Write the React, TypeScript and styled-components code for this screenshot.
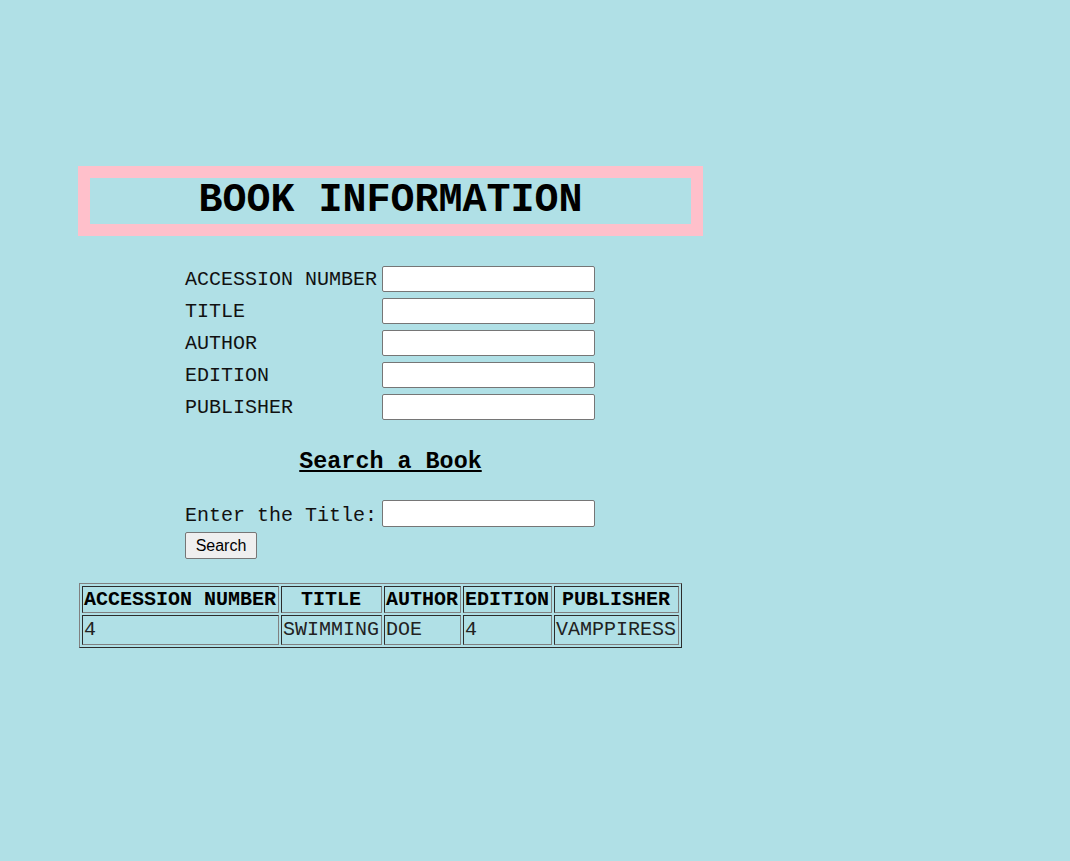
import React from "react";
import styled, { createGlobalStyle } from "styled-components";

const Global = createGlobalStyle`
  html, body {
    margin: 0;
    padding: 0;
    background: #b0e0e6;
  }
  body {
    font-family: "Liberation Mono", "Courier New", monospace;
    font-size: 20px;
    color: #000;
  }
`;

const Page = styled.div`
  padding: 166px 0 0 78px;
  min-height: 861px;
  box-sizing: border-box;
`;

const Column = styled.div`
  width: 625px;
  display: flex;
  flex-direction: column;
`;

const Banner = styled.h1`
  margin: 0;
  border: 12px solid #ffc0cb;
  height: 46px;
  line-height: 46px;
  font-size: 40px;
  font-weight: bold;
  text-align: center;
`;

const FieldGrid = styled.div<{ $top: number }>`
  display: grid;
  grid-template-columns: 192px 213px;
  column-gap: 5px;
  row-gap: 6px;
  align-self: flex-start;
  margin: ${(p) => p.$top}px 0 0 107px;
`;

const Label = styled.label<{ $shift?: number }>`
  font-size: 20px;
  line-height: 26px;
  height: 26px;
  padding-top: ${(p) => p.$shift ?? 1}px;
  box-sizing: border-box;
  white-space: nowrap;
  color: #111;
`;

const TextInput = styled.input`
  box-sizing: border-box;
  width: 213px;
  height: 26px;
  margin: 0;
  border: 1px solid #767676;
  border-radius: 2px;
  background: #fff;
  padding: 1px 2px;
  font-size: 16px;
`;

const SearchInput = styled(TextInput)`
  height: 27px;
`;

const SubHeading = styled.h3`
  margin: 29px 0 0;
  font-size: 23.4px;
  line-height: 26px;
  font-weight: bold;
  text-decoration: underline;
  text-align: center;
`;

const ButtonRow = styled.div`
  grid-column: 1 / span 2;
  margin-top: -1px;
`;

const Button = styled.button`
  box-sizing: border-box;
  height: 27px;
  width: 72px;
  margin: 0;
  padding: 0 8px;
  font-family: Arial, "Liberation Sans", sans-serif;
  font-size: 16px;
  color: #000;
  background: #efefef;
  border: 1px solid #767676;
  border-radius: 2px;
`;

const ResultTable = styled.table`
  margin: 24px 0 0 1px;
  border-collapse: separate;
  border-spacing: 2px;
  border: 1px outset #808080;
  font-size: 20px;
`;

const HeadCell = styled.th`
  border: 1px inset #808080;
  padding: 1px 2px 1px 1px;
  font-weight: bold;
  text-align: center;
  line-height: 23px;
  white-space: nowrap;
`;

const Cell = styled.td`
  border: 1px inset #808080;
  padding: 2px 2px 2px 1px;
  line-height: 24px;
  text-align: left;
  white-space: nowrap;
  color: #222;
`;

const fields = ["ACCESSION NUMBER", "TITLE", "AUTHOR", "EDITION", "PUBLISHER"];
const rows = [["4", "SWIMMING", "DOE", "4", "VAMPPIRESS"]];

export default function App() {
  return (
    <>
      <Global />
      <Page>
        <Column>
          <Banner>BOOK INFORMATION</Banner>
          <FieldGrid $top={30}>
            {fields.map((f) => (
              <React.Fragment key={f}>
                <Label>{f}</Label>
                <TextInput type="text" />
              </React.Fragment>
            ))}
          </FieldGrid>
          <SubHeading>Search a Book</SubHeading>
          <FieldGrid $top={25}>
            <Label $shift={3}>Enter the Title:</Label>
            <SearchInput type="text" />
            <ButtonRow>
              <Button type="button">Search</Button>
            </ButtonRow>
          </FieldGrid>
        </Column>
        <ResultTable>
          <thead>
            <tr>
              {fields.map((f) => (
                <HeadCell key={f}>{f}</HeadCell>
              ))}
            </tr>
          </thead>
          <tbody>
            {rows.map((r, i) => (
              <tr key={i}>
                {r.map((c, j) => (
                  <Cell key={j}>{c}</Cell>
                ))}
              </tr>
            ))}
          </tbody>
        </ResultTable>
      </Page>
    </>
  );
}
